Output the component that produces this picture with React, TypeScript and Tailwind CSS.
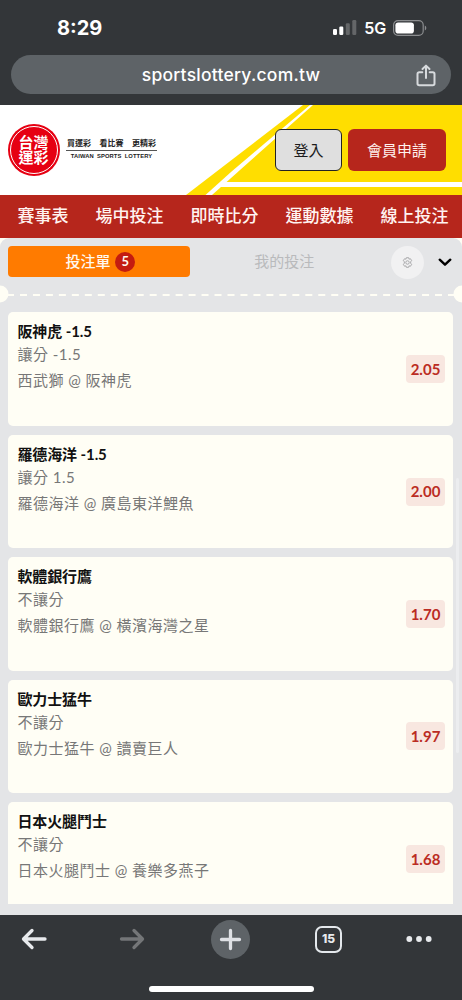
const bets = [
  { title: "阪神虎 -1.5", type: "讓分 -1.5", match: "西武獅 @ 阪神虎", odds: "2.05" },
  { title: "羅德海洋 -1.5", type: "讓分 1.5", match: "羅德海洋 @ 廣島東洋鯉魚", odds: "2.00" },
  { title: "軟體銀行鷹", type: "不讓分", match: "軟體銀行鷹 @ 橫濱海灣之星", odds: "1.70" },
  { title: "歐力士猛牛", type: "不讓分", match: "歐力士猛牛 @ 讀賣巨人", odds: "1.97" },
  { title: "日本火腿鬥士", type: "不讓分", match: "日本火腿鬥士 @ 養樂多燕子", odds: "1.68" },
];

const navItems = ["賽事表", "場中投注", "即時比分", "運動數據", "線上投注"];

function BrowserTop() {
  return (
    <div className="h-[105px] shrink-0 bg-[#333639] font-['Inter',sans-serif] text-white">
      <div className="flex h-[55px] items-center justify-between pl-[57px] pr-[35px]">
        <span className="text-[20px] font-bold leading-none">8:29</span>
        <div className="flex items-center">
          <svg width="24" height="15" viewBox="0 0 24 15" fill="#fff">
            <rect x="0" y="9" width="4" height="6" rx="1.2" />
            <rect x="6.3" y="6.5" width="4" height="8.5" rx="1.2" />
            <rect x="12.8" y="3.3" width="4" height="11.7" rx="1.2" fill="#646668" />
            <rect x="19.3" y="0" width="4" height="15" rx="1.2" fill="#646668" />
          </svg>
          <span className="ml-[7px] text-[16px] font-semibold leading-none tracking-[-0.2px]">5G</span>
          <svg className="ml-[7px]" width="34" height="16" viewBox="0 0 34 16" fill="none">
            <rect x="0.6" y="0.6" width="29.6" height="14.8" rx="4.4" stroke="#8b8d8f" strokeWidth="1.2" />
            <rect x="2.4" y="2.4" width="18.5" height="11.2" rx="2.8" fill="#fff" />
            <path d="M31.8 5.5c2 .8 2 4.2 0 5z" fill="#8b8d8f" />
          </svg>
        </div>
      </div>
      {/* 網址列 */}
      <div className="mx-[11px] flex h-[39px] items-center justify-end rounded-full bg-[#5e6367] pr-[15px]">
        <span className="flex-1 pl-[35px] text-center text-[17.5px] font-medium leading-none tracking-[0.25px]">
          sportslottery.com.tw
        </span>
        <svg
          className="mt-px"
          width="20"
          height="23"
          viewBox="0 0 20 23"
          fill="none"
          stroke="#d7dadd"
          strokeWidth="2"
          strokeLinecap="round"
          strokeLinejoin="round"
        >
          <path d="M6.3 8.3H3.2A1.7 1.7 0 0 0 1.5 10v9.6a1.7 1.7 0 0 0 1.7 1.7h13.6a1.7 1.7 0 0 0 1.7-1.7V10a1.7 1.7 0 0 0-1.7-1.7h-3.1" />
          <path d="M10 14V2M6.5 5 10 1.6 13.5 5" />
        </svg>
      </div>
    </div>
  );
}

function Logo() {
  return (
    <div className="flex items-center">
      <div className="flex size-[52px] items-center justify-center rounded-full bg-[#e60012]">
        <div className="flex size-[48px] items-center justify-center rounded-full border border-white">
          <span className="w-[31px] break-all text-[15px] font-bold leading-[15px] text-white">台灣運彩</span>
        </div>
      </div>
      <div className="ml-[6px] w-[91px] text-center text-[#222]">
        <div className="flex justify-between border-b border-[#555] px-[1px] pb-[1px] text-[8px] font-bold leading-[12px]">
          <span>買運彩</span>
          <span>看比賽</span>
          <span>更精彩</span>
        </div>
        <div className="whitespace-nowrap pb-[3px] pt-[1.5px] font-['Liberation_Sans',sans-serif] text-[5.8px] font-bold leading-[8px] tracking-[0.1px] [word-spacing:1.5px]">
          TAIWAN SPORTS LOTTERY
        </div>
      </div>
    </div>
  );
}

function SiteHeader() {
  return (
    <header className="relative flex h-[90px] shrink-0 items-center justify-between bg-white pl-[8px] pr-[16px]">
      <svg className="absolute inset-0" width="462" height="90" viewBox="0 0 462 90">
        <path d="M303 0H462V90H186z" fill="#ffde00" />
        <path d="M310 0h3L212 90H205.500L231 67z" fill="#fff" />
        <path d="M224 77H462v5H218z" fill="#fff" />
      </svg>
      <div className="relative">
        <Logo />
      </div>
      <div className="relative flex gap-[6px] text-[15px]">
        <button className="h-[42px] w-[67px] rounded-[6px] border border-[#222] bg-[#dfdfdf] text-[#1c1c1c]">
          登入
        </button>
        <button className="h-[42px] w-[98px] rounded-[6px] bg-[#b6261c] text-[#fff1ee]">會員申請</button>
      </div>
    </header>
  );
}

function SlipTabs() {
  return (
    <div className="relative h-[65.5px] shrink-0">
      <div className="flex items-start pl-[8.4px] pt-[8.6px]">
        <button className="flex h-[31px] w-[182px] items-center justify-center rounded-[4px] bg-[#ff7b00] pl-[2px] text-[15px] font-medium text-[#fff8ef]">
          投注單
          <span className="ml-[5px] flex size-[20px] items-center justify-center rounded-full bg-[#c41c10] text-[13px] font-bold leading-none">
            5
          </span>
        </button>
        <span className="w-[187.5px] text-center text-[15px] leading-[31px] text-[#b9babc]">我的投注</span>
        <span className="ml-[13px] flex size-[33px] items-center justify-center rounded-full bg-[#f1f1f2]">
          <svg width="11" height="11" viewBox="0 0 24 24" fill="none" stroke="#a4a4a6" strokeWidth="2">
            <path
              d="M9.500 1.500h5l.8 3.200 3.200-.9 2.600 4.300L18.800 10.500v3l2.300 2.400-2.600 4.300-3.200-.9-.8 3.200h-5l-.8-3.200-3.200.9-2.600-4.300 2.300-2.400v-3L2.900 8.100l2.600-4.300 3.200.9z"
              strokeLinejoin="round"
            />
            <circle cx="12" cy="12" r="3.8" />
          </svg>
        </span>
        <svg className="ml-[14px] mt-[12px]" width="14" height="9" viewBox="0 0 14 9" fill="none">
          <path d="m1.7 1.7 5.3 5 5.3-5" stroke="#000" strokeWidth="2.4" strokeLinecap="round" strokeLinejoin="round" />
        </svg>
      </div>
      {/* 票根缺口與虛線 */}
      <svg className="absolute bottom-0 left-0" width="462" height="18" viewBox="0 0 462 18">
        <path d="M7 10H455" stroke="#fffef5" strokeWidth="2.2" strokeDasharray="7 5.97" />
        <circle cx="0" cy="9" r="8.5" fill="#fffef5" />
        <circle cx="462" cy="9" r="8.5" fill="#fffef5" />
      </svg>
    </div>
  );
}

function BetCard({ bet }: { bet: (typeof bets)[number] }) {
  return (
    <div className="flex h-[113.6px] shrink-0 items-center justify-between rounded-[5px] bg-[#fffef5] pl-[9px] pr-[8.4px]">
      <div className="h-full pt-[8px]">
        <div className="text-[15px] font-bold leading-[23px] tracking-[-0.1px] text-[#111]">{bet.title}</div>
        <div className="text-[15px] leading-[23px] tracking-[0.5px] text-[#777]">{bet.type}</div>
        <div className="mt-[3px] text-[15px] leading-[23px] tracking-[0.5px] text-[#777]">{bet.match}</div>
      </div>
      <span className="flex h-[28px] w-[39px] items-center justify-center rounded-[4px] bg-[#f8e7e0] text-[15px] font-bold text-[#bb2c23]">
        {bet.odds}
      </span>
    </div>
  );
}

function BrowserBottom() {
  return (
    <div className="flex h-[85px] shrink-0 flex-col items-center justify-between bg-[#333639] pb-[8px] pt-[4.5px]">
      <div className="flex h-[39px] w-full items-center pl-[21px]">
        <svg
          width="26"
          height="22"
          viewBox="0 0 26 22"
          fill="none"
          stroke="#e8eaed"
          strokeWidth="3.3"
          strokeLinecap="round"
          strokeLinejoin="round"
        >
          <path d="M24 11H3M11 2.500 2.500 11l8.500 8.500" />
        </svg>
        <svg
          className="ml-[72px]"
          width="26"
          height="22"
          viewBox="0 0 26 22"
          fill="none"
          stroke="#747678"
          strokeWidth="3.3"
          strokeLinecap="round"
          strokeLinejoin="round"
        >
          <path d="M2.500 11H23M15 2.500l8.500 8.500-8.500 8.500" />
        </svg>
        <span className="ml-[66px] flex size-[39px] items-center justify-center rounded-full bg-[#5e6367]">
          <svg width="23" height="23" viewBox="0 0 23 23" stroke="#dfe1e5" strokeWidth="3.3" strokeLinecap="round">
            <path d="M11.500 2.500v18M2.500 11.500h18" />
          </svg>
        </span>
        <span className="ml-[65px] flex size-[27px] items-center justify-center rounded-[7px] border-2 border-[#e4e8ec] font-['Inter',sans-serif] text-[12px] font-extrabold leading-none text-[#e8eaed]">
          15
        </span>
        <svg className="ml-[64px]" width="26" height="6" viewBox="0 0 26 6" fill="#e8eaed">
          <circle cx="3.3" cy="3" r="2.9" />
          <circle cx="13" cy="3" r="2.9" />
          <circle cx="22.7" cy="3" r="2.9" />
        </svg>
      </div>
      <div className="h-[6px] w-[165px] rounded-full bg-white" />
    </div>
  );
}

export default function App() {
  return (
    <div className="flex h-[1000px] w-[462px] flex-col overflow-hidden bg-[#fffef5] font-['Lato','Noto_Sans_CJK_TC',sans-serif]">
      <BrowserTop />
      <SiteHeader />
      <nav className="flex h-[42.5px] shrink-0 items-center justify-between whitespace-nowrap bg-[#b6261c] pb-px pl-[17.5px] pr-[13.5px] text-[17px] font-medium text-[#fff3f0]">
        {navItems.map((item) => (
          <span key={item}>{item}</span>
        ))}
      </nav>
      <main className="relative flex min-h-0 flex-1 flex-col rounded-t-[9px] bg-[#e4e5e7] pb-[11px]">
        <SlipTabs />
        <div className="ml-[8.4px] mr-[8.6px] mt-[9.4px] flex min-h-0 flex-1 flex-col gap-[8.8px] overflow-hidden">
          {bets.map((bet) => (
            <BetCard key={bet.title} bet={bet} />
          ))}
        </div>
        {/* 捲軸 */}
        <div className="absolute right-[3px] top-[240px] h-[275px] w-[3px] rounded-full bg-[#ecedef]" />
      </main>
      <BrowserBottom />
    </div>
  );
}
